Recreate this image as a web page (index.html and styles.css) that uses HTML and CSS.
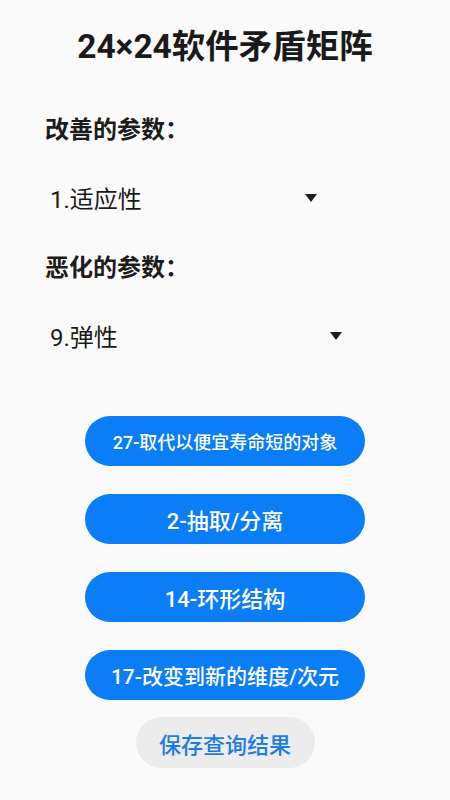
FILE: index.html
```html
<!DOCTYPE html>
<html lang="zh-CN">
<head>
<meta charset="utf-8">
<title>24×24软件矛盾矩阵</title>
<link rel="stylesheet" href="styles.css">
</head>
<body>
<main class="page">
  <h1 class="title">24×24软件矛盾矩阵</h1>
  <div class="label label-first">改善的参数：</div>
  <div class="spinner spinner-a">
    <span class="spinner-text">1.适应性</span>
    <span class="arrow"></span>
  </div>
  <div class="label">恶化的参数：</div>
  <div class="spinner spinner-b">
    <span class="spinner-text">9.弹性</span>
    <span class="arrow"></span>
  </div>
  <div class="actions">
    <button class="pill pill-xs">27-取代以便宜寿命短的对象</button>
    <button class="pill">2-抽取/分离</button>
    <button class="pill">14-环形结构</button>
    <button class="pill pill-sm">17-改变到新的维度/次元</button>
    <button class="save">保存查询结果</button>
  </div>
</main>
</body>
</html>
```

FILE: styles.css
```css
* { box-sizing: border-box; }
html, body {
  margin: 0;
  padding: 0;
  background: #fafafa;
}
body {
  font-family: Roboto, "Noto Sans CJK SC", "Noto Sans", sans-serif;
  color: #1c1c1c;
  width: 450px;
  height: 800px;
  overflow: hidden;
}
.page {
  display: flex;
  flex-direction: column;
}
.title {
  margin: 0;
  padding-top: 25px;
  height: 69px;
  line-height: 44px;
  font-size: 33.5px;
  font-weight: 700;
  text-align: center;
  color: #1a1a1a;
}
.label {
  margin: 32px 0 0 45px;
  height: 30px;
  line-height: 30px;
  font-size: 24px;
  font-weight: 700;
  color: #1c1c1c;
}
.label-first { margin-top: 46px; }
.spinner {
  margin: 28px 0 0 50px;
  height: 48px;
  display: flex;
  align-items: center;
  justify-content: space-between;
}
.spinner-a { width: 267px; }
.spinner-b { width: 292px; }
.spinner-text {
  font-size: 24px;
  color: #1a1a1a;
}
.arrow {
  width: 0;
  height: 0;
  border-left: 6px solid transparent;
  border-right: 6px solid transparent;
  border-top: 8px solid #1c1c1c;
  margin-top: 2px;
}
.actions {
  margin-top: 57px;
  display: flex;
  flex-direction: column;
  align-items: center;
  gap: 28px;
}
.pill {
  width: 280px;
  height: 50px;
  border: none;
  border-radius: 25px;
  background: #0a7df7;
  color: #ffffff;
  font-family: inherit;
  font-size: 22px;
  font-weight: 500;
  padding: 0;
}
.pill-xs { font-size: 18px; }
.pill-sm { font-size: 21px; }
.save {
  margin-top: -11px;
  width: 179px;
  height: 51px;
  border: none;
  border-radius: 26px;
  background: #ececec;
  color: #1c7ce0;
  font-family: inherit;
  font-size: 22px;
  font-weight: 500;
  padding: 0;
}
```
